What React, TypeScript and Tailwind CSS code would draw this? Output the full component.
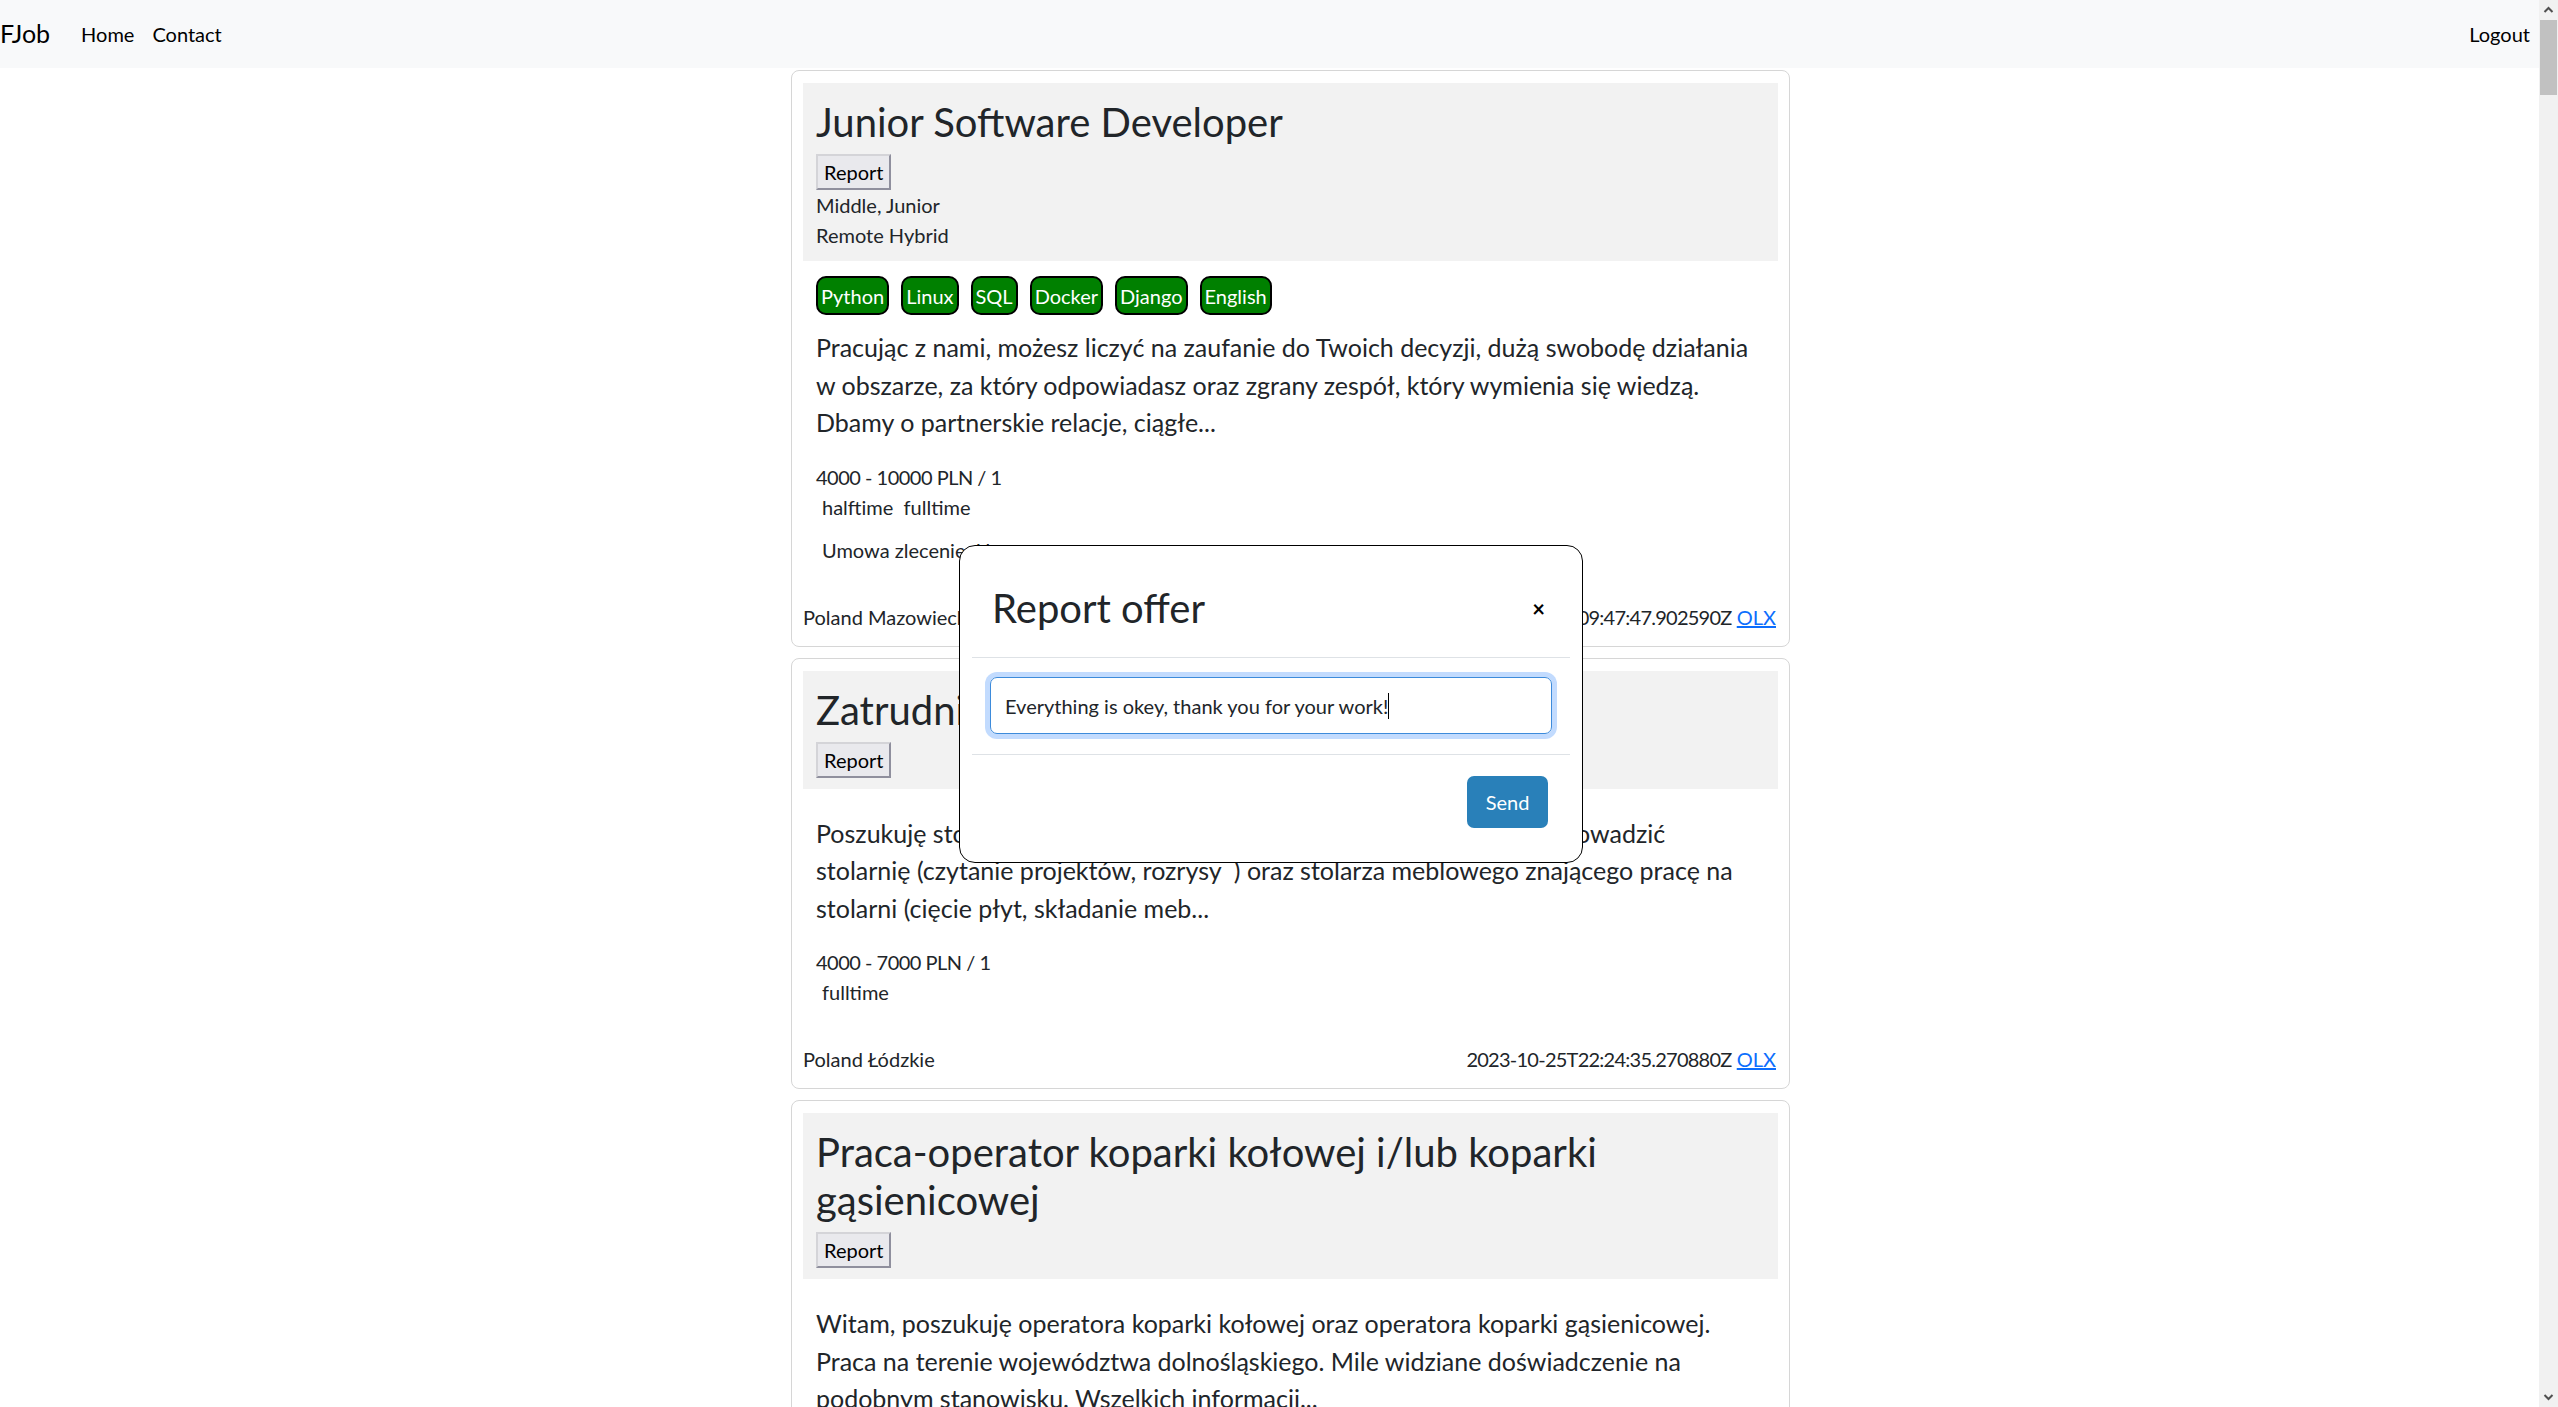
import React from "react";

type Offer = {
  title: string;
  meta?: string[];
  tags: string[];
  lines: string[];
  salary: string;
  times: string;
  contract?: string;
  location: string;
  date: string;
};

const offers: Offer[] = [
  {
    title: "Junior Software Developer",
    meta: ["Middle, Junior", "Remote Hybrid"],
    tags: ["Python", "Linux", "SQL", "Docker", "Django", "English"],
    lines: [
      "Pracując z nami, możesz liczyć na zaufanie do Twoich decyzji, dużą swobodę działania",
      "w obszarze, za który odpowiadasz oraz zgrany zespół, który wymienia się wiedzą.",
      "Dbamy o partnerskie relacje, ciągłe...",
    ],
    salary: "4000 - 10000 PLN / 1",
    times: "halftime\u00a0\u00a0fulltime",
    contract: "Umowa zlecenie\u00a0\u00a0Umowa o pracę",
    location: "Poland Mazowieckie",
    date: "2023-10-26T09:47:47.902590Z",
  },
  {
    title: "Zatrudnię stolarza meblowego",
    tags: [],
    lines: [
      "Poszukuję stolarza z doświadczeniem, który potrafi samodzielnie poprowadzić",
      "stolarnię (czytanie projektów, rozrysy\u00a0 ) oraz stolarza meblowego znającego pracę na",
      "stolarni (cięcie płyt, składanie meb...",
    ],
    salary: "4000 - 7000 PLN / 1",
    times: "fulltime",
    location: "Poland Łódzkie",
    date: "2023-10-25T22:24:35.270880Z",
  },
  {
    title: "Praca-operator koparki kołowej i/lub koparki gąsienicowej",
    tags: [],
    lines: [
      "Witam, poszukuję operatora koparki kołowej oraz operatora koparki gąsienicowej.",
      "Praca na terenie województwa dolnośląskiego. Mile widziane doświadczenie na",
      "podobnym stanowisku. Wszelkich informacji...",
    ],
    salary: "4000 - 6000 PLN / 1",
    times: "fulltime",
    location: "Poland Dolnośląskie",
    date: "2023-10-25T18:12:03.118204Z",
  },
];

function OfferCard({ o }: { o: Offer }) {
  return (
    <div className="w-[999px] border border-[#d6d6d6] rounded-[8px] px-[11px] pt-[12px] pb-[14px] bg-white">
      <div className="bg-[#f2f2f2] px-[13px] pt-[15px] pb-[11px]">
        <h2 className="text-[40px] leading-[48px] mb-[8px] text-[#212529]">{o.title}</h2>
        <button className="h-[36px] px-[6px] text-[20px] bg-[#e9e9ed] text-black border-2 border-t-[#d4d4d8] border-l-[#d4d4d8] border-r-[#8f8f9d] border-b-[#8f8f9d]">
          Report
        </button>
        {o.meta?.map((m) => (
          <div key={m} className="text-[20px] leading-[30px] text-[#212529]">{m}</div>
        ))}
      </div>

      <div className="px-[13px]">
        {o.tags.length > 0 && (
          <div className="flex gap-[12px] mt-[15px]">
            {o.tags.map((t) => (
              <span key={t} className="h-[39px] flex items-center px-[3px] bg-[#008000] border-2 border-black rounded-[10px] text-white text-[20px]">
                {t}
              </span>
            ))}
          </div>
        )}
        <p className={`text-[25px] leading-[37.5px] text-[#212529] ${o.tags.length > 0 ? "mt-[14px]" : "mt-[26px]"}`}>
          {o.lines.map((l, i) => (
            <React.Fragment key={i}>
              {l}
              {i < o.lines.length - 1 && <br />}
            </React.Fragment>
          ))}
        </p>
        <div className="mt-[20px] text-[20px] leading-[30px] tracking-[-0.5px] text-[#212529]">{o.salary}</div>
        <div className="pl-[6px] text-[20px] leading-[30px] text-[#212529]">{o.times}</div>
        {o.contract && <div className="mt-[13px] pl-[6px] text-[20px] leading-[30px] text-[#212529]">{o.contract}</div>}
      </div>

      <div className="mt-[37px] flex justify-between text-[20px] leading-[30px] text-[#212529] pr-[2px]">
        <span>{o.location}</span>
        <span>
          <span className="tracking-[-0.75px]">{o.date}</span> <a className="text-[#0d6efd] underline">OLX</a>
        </span>
      </div>
    </div>
  );
}

export default function App() {
  return (
    <div className="min-h-screen bg-white" style={{ fontFamily: "Lato, 'Noto Sans', sans-serif" }}>
      <nav className="h-[68px] bg-[#f8f9fa] flex items-center pr-[28px]">
        <span className="text-[25px] text-black">FJob</span>
        <a className="ml-[31px] text-[20px] text-black">Home</a>
        <a className="ml-[18px] text-[20px] text-black">Contact</a>
        <a className="ml-auto text-[20px] text-black">Logout</a>
      </nav>

      <div className="ml-[791px] pt-[2px] flex flex-col gap-[11px] pb-[40px]">
        {offers.map((o) => (
          <OfferCard key={o.title} o={o} />
        ))}
      </div>

      {/* report modal */}
      <div className="fixed left-[959px] top-[545px] w-[624px] h-[318px] bg-white border border-black rounded-[16px]">
        <div className="flex items-center justify-between pl-[32px] pr-[37px] pt-[38px] pb-[25px]">
          <h3 className="text-[40px] leading-[48px] text-[#212529]">Report offer</h3>
          <span className="text-[22px] font-bold text-black">×</span>
        </div>
        <div className="mx-[12px] border-t border-[#dee2e6]" />
        <div className="px-[30px] pt-[19px] pb-[20px]">
          <div className="h-[57px] flex items-center px-[14px] border border-[#3d8bdb] rounded-[7px] shadow-[0_0_0_5px_#c2dbfe] text-[20px] text-[#212529]">
            Everything is okey, thank you for your work!
            <span className="w-px h-[26px] bg-black" />
          </div>
        </div>
        <div className="mx-[12px] border-t border-[#dee2e6]" />
        <div className="flex justify-end pr-[34px] pt-[21px]">
          <button className="w-[81px] h-[52px] rounded-[7px] bg-[#2980b9] text-white text-[20px]">Send</button>
        </div>
      </div>

      {/* window scrollbar */}
      <div className="fixed right-0 top-0 w-[19px] h-screen bg-[#f1f1f1] flex flex-col items-center">
        <svg width="19" height="20" viewBox="0 0 19 20">
          <path d="M5.5 12 L9.5 8 L13.5 12" fill="none" stroke="#505050" strokeWidth="2" />
        </svg>
        <div className="w-[17px] h-[75px] bg-[#c1c1c1]" />
        <div className="flex-1" />
        <svg width="19" height="20" viewBox="0 0 19 20">
          <path d="M5.5 8 L9.5 12 L13.5 8" fill="none" stroke="#505050" strokeWidth="2" />
        </svg>
      </div>
    </div>
  );
}
